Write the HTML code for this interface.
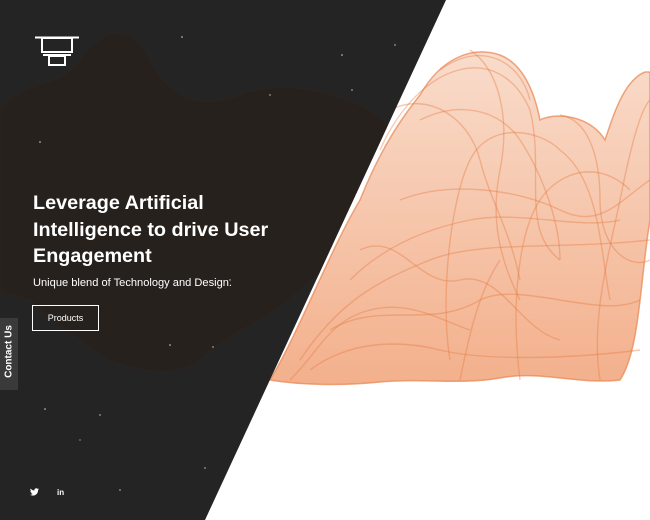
<!DOCTYPE html>
<html><head><style>
html,body{margin:0;padding:0;width:650px;height:520px;overflow:hidden;background:#fff;font-family:"Liberation Sans",sans-serif}
svg{position:absolute;left:0;top:0}
.h1{position:absolute;left:33px;top:190px;color:#fff;font-size:19.8px;font-weight:bold;line-height:26.5px;width:280px}
.sub{position:absolute;left:33px;top:277px;color:#fff;font-size:11.1px}
.btn{position:absolute;left:32px;top:305px;width:65px;height:24px;border:1.5px solid #fff;color:#fff;font-size:9px;text-align:center;line-height:24px}
.contact{position:absolute;left:0;top:318px;width:18px;height:72px;background:#3a3a3a}
.contact span{position:absolute;left:-27px;top:28px;width:72px;transform:rotate(-90deg);color:#fff;font-size:10px;font-weight:bold;text-align:center;white-space:nowrap}
.soc{position:absolute;top:488px;color:#fff;font-size:8px;font-weight:bold}
</style></head><body>
<svg width="650" height="520" viewBox="0 0 650 520">
<defs>
<linearGradient id="g" x1="0" y1="0" x2="0" y2="1"><stop offset="0" stop-color="#f9dccb"/><stop offset="1" stop-color="#f3b08c"/></linearGradient>
<clipPath id="dk"><polygon points="0,0 446,0 205,520 0,520"/></clipPath>
</defs>
<g fill="url(#g)" stroke="#e8834f" stroke-opacity=".7" stroke-width="1.5">
<path d="M270 380 C300 330 330 250 360 200 C380 150 400 120 420 95 C440 60 470 45 500 55 C525 65 535 95 540 120 C555 112 590 115 605 140 C615 110 625 80 645 72 L650 72 L650 220 C640 280 640 350 620 380 C580 385 540 370 500 378 C460 385 420 378 380 382 C340 386 300 385 270 380 Z"/>
</g>
<g fill="none" stroke="#e57a40" stroke-opacity=".4" stroke-width="1.4">
<path d="M380 150 C420 60 500 40 530 110 C545 170 520 230 560 260"/>
<path d="M450 360 C440 300 450 200 470 160 C490 120 540 130 560 150 C600 180 600 250 610 300"/>
<path d="M300 360 C340 300 380 280 430 260 C480 240 560 250 650 240"/>
<path d="M520 380 C510 300 520 230 540 200 C560 170 600 160 630 190"/>
<path d="M400 200 C450 180 520 190 560 210 C600 230 620 200 650 180"/>
<path d="M330 330 C380 300 430 330 480 300 C520 280 600 320 640 300"/>
<path d="M600 380 C590 320 610 250 620 200 C630 150 640 110 650 100"/>
<path d="M420 120 C460 100 500 110 520 140 C540 170 560 220 560 260"/>
<path d="M360 250 C400 230 420 290 460 280 C500 270 520 330 560 340"/>
<path d="M440 70 C480 40 520 60 530 100 M460 380 C470 330 480 290 500 260"/>
<path d="M310 370 C350 340 400 340 440 350 C480 360 560 360 640 350"/>
<path d="M390 110 C430 90 470 120 480 160 C490 200 510 230 520 280"/>
<path d="M560 115 C590 120 600 160 600 200 C600 250 630 270 650 260"/>
<path d="M350 280 C380 250 420 230 470 220 C520 210 580 230 620 220"/>
<path d="M290 380 C320 350 330 320 370 310 C410 300 440 320 470 330"/>
<path d="M470 50 C500 70 510 120 500 170 C490 220 500 260 520 300"/>
</g>
<polygon points="0,0 446,0 205,520 0,520" fill="#242424"/>
<g clip-path="url(#dk)" fill="#2a1f19" fill-opacity=".55" stroke="#3a2518" stroke-opacity=".4">
<path d="M0 110 C20 80 60 90 80 60 C100 30 130 20 150 60 C170 100 200 110 240 95 C280 80 330 90 370 110 C400 130 410 160 400 200 C390 240 330 260 300 290 C270 320 230 330 200 360 C170 380 140 370 110 360 C80 340 50 320 30 300 L0 290 Z"/>
</g>
<g fill="#fff" opacity=".8">
<circle cx="182" cy="37" r=".8"/><circle cx="342" cy="55" r=".8"/><circle cx="352" cy="90" r=".7"/><circle cx="270" cy="95" r=".7"/><circle cx="40" cy="142" r=".8"/><circle cx="230" cy="280" r=".7"/><circle cx="170" cy="345" r=".8"/><circle cx="213" cy="347" r=".7"/><circle cx="45" cy="409" r=".8"/><circle cx="120" cy="490" r=".7"/><circle cx="205" cy="468" r=".7"/><circle cx="100" cy="415" r=".7"/><circle cx="395" cy="45" r=".7"/><circle cx="80" cy="440" r=".6"/>
</g>
<g fill="none" stroke="#fff" stroke-width="2">
<line x1="35" y1="37.5" x2="79" y2="37.5"/>
<rect x="42" y="38" width="30" height="14"/>
<rect x="49" y="56" width="16" height="9"/>
<line x1="43" y1="55" x2="71" y2="55"/>
</g>
</svg>
<div class="h1">Leverage Artificial Intelligence to drive User Engagement</div>
<div class="sub">Unique blend of Technology and Design.</div>
<div class="btn">Products</div>
<div class="contact"><span>Contact Us</span></div>
<svg style="left:30px;top:488px" width="9" height="8" viewBox="0 0 24 20"><path fill="#fff" d="M24 2.4a10 10 0 0 1-2.8.8A5 5 0 0 0 23.3.4a10 10 0 0 1-3.1 1.2A4.9 4.9 0 0 0 11.8 6 14 14 0 0 1 1.7.9a4.9 4.9 0 0 0 1.5 6.6A5 5 0 0 1 1 6.9a4.9 4.9 0 0 0 3.9 4.8 5 5 0 0 1-2.2.1 4.9 4.9 0 0 0 4.6 3.4A9.9 9.9 0 0 1 0 17.3 14 14 0 0 0 7.5 19.5c9.1 0 14-7.5 14-14v-.6A10 10 0 0 0 24 2.4z"/></svg>
<div class="soc" style="left:57px">in</div>
</body></html>
